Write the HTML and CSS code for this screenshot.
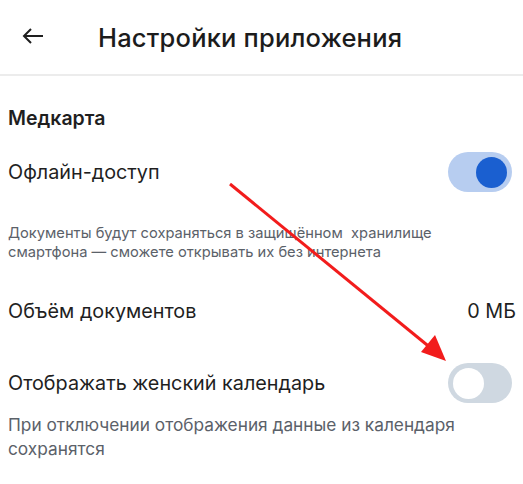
FILE: index.html
```html
<!DOCTYPE html>
<html lang="ru">
<head>
    <meta charset="UTF-8">
    <title>Настройки приложения</title>
    <link rel="stylesheet" href="styles.css">
</head>
<body>
    <div class="header">
        <svg class="back" width="22" height="16" viewBox="0 0 22 16">
            <path d="M21 8H2M9 1L2 8l7 7" fill="none" stroke="#1f1f1f" stroke-width="2"/>
        </svg>
        <h1>Настройки приложения</h1>
    </div>

    <div class="content">
        <h2>Медкарта</h2>

        <div class="row row-toggle">
            <span class="label">Офлайн-доступ</span>
            <span class="toggle on"><span class="knob"></span></span>
        </div>
        <p class="hint small">Документы будут сохраняться в защищённом &nbsp;хранилище смартфона — сможете открывать их без интернета</p>

        <div class="row row-size">
            <span class="label">Объём документов</span>
            <span class="value">0 МБ</span>
        </div>

        <div class="row row-toggle row-calendar">
            <span class="label">Отображать женский календарь</span>
            <span class="toggle"><span class="knob"></span></span>
        </div>
        <p class="hint">При отключении отображения данные из календаря сохранятся</p>
    </div>

    <!-- стрелка-пометка поверх экрана -->
    <svg class="pointer" width="523" height="484" viewBox="0 0 523 484">
        <line x1="230" y1="184" x2="432" y2="349" stroke="#f21c1c" stroke-width="3"/>
        <polygon points="446,361 421,352 435,335" fill="#f21c1c"/>
    </svg>
</body>
</html>
```

FILE: styles.css
```css
body {
    margin: 0;
    font-family: Inter, "Noto Sans", sans-serif;
    background: #fff;
    color: #1f1f1f;
    position: relative;
    width: 523px;
    height: 484px;
    overflow: hidden;
}
.header {
    height: 74px;
    display: flex;
    align-items: center;
    border-bottom: 2px solid #ececec;
}
.back {
    margin-left: 22px;
    margin-top: -2px;
}
.header h1 {
    margin: 0 0 0 54px;
    font-size: 25.5px;
    font-weight: 500;
    color: #1c1c1c;
    letter-spacing: 0.2px;
}
.content {
    padding: 0 11px 0 8px;
}
h2 {
    margin: 30px 0 0;
    font-size: 19.5px;
    font-weight: 600;
    line-height: 24px;
}
.row {
    display: flex;
    align-items: center;
    justify-content: space-between;
}
.label {
    font-size: 19.8px;
}
.row-toggle {
    height: 40px;
    margin-top: 22px;
}
.toggle {
    width: 64px;
    height: 40px;
    border-radius: 20px;
    background: #cfd8e1;
    display: flex;
    align-items: center;
    padding: 0 5px;
    box-sizing: border-box;
}
.toggle .knob {
    width: 31px;
    height: 31px;
    border-radius: 50%;
    background: #fff;
}
.toggle.on {
    background: #b7cdf0;
    justify-content: flex-end;
}
.toggle.on .knob {
    background: #1a5fd0;
}
.hint {
    margin: 0;
    color: #5b6169;
    font-size: 17.3px;
    line-height: 24px;
}
.hint.small {
    max-width: 445px;
    margin-top: 32px;
    font-size: 14.7px;
    line-height: 19px;
}
.row-size {
    margin-top: 35px;
    height: 28px;
}
.value {
    font-size: 19.8px;
    margin-right: -4px;
}
.row-calendar {
    margin-top: 38px;
}
.row-calendar + .hint {
    margin-top: 10px;
}
.pointer {
    position: absolute;
    left: 0;
    top: 0;
    pointer-events: none;
}
```
